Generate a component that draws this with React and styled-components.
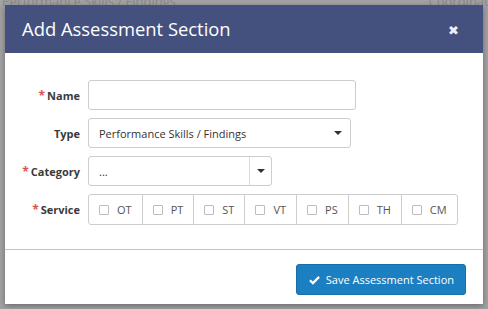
import React from "react";
import styled, { createGlobalStyle } from "styled-components";

const GlobalStyle = createGlobalStyle`
  html, body {
    margin: 0;
    padding: 0;
    width: 488px;
    height: 309px;
    overflow: hidden;
    font-family: "Open Sans", "Liberation Sans", sans-serif;
  }
`;

const services = ["OT", "PT", "ST", "VT", "PS", "TH", "CM"];

export default function App() {
  return (
    <>
      <GlobalStyle />
      <Backdrop>
        <BehindRow>
          <span>Performance Skills / Findings</span>
          <span>Coordinati</span>
        </BehindRow>
        <Modal>
          <Header>
            <Title>Add Assessment Section</Title>
            <Close>✖</Close>
          </Header>
          <Body>
            <Row>
              <Label required>Name</Label>
              <TextInput width={268} />
            </Row>
            <Row>
              <Label>Type</Label>
              <Select width={263}>
                <SelectText>Performance Skills / Findings</SelectText>
                <Caret />
              </Select>
            </Row>
            <Row>
              <Label required>Category</Label>
              <Select width={184}>
                <SelectText>...</SelectText>
                <CaretBox>
                  <Caret />
                </CaretBox>
              </Select>
            </Row>
            <Row>
              <Label required>Service</Label>
              <ServiceGroup>
                {services.map((s) => (
                  <ServiceItem key={s}>
                    <Check />
                    <span>{s}</span>
                  </ServiceItem>
                ))}
              </ServiceGroup>
            </Row>
          </Body>
          <Footer>
            <SaveButton>
              <svg width="11" height="10" viewBox="0 0 12 10">
                <path
                  d="M1 5.2 L4.3 8.4 L11 1.6"
                  fill="none"
                  stroke="#fff"
                  strokeWidth="2.4"
                />
              </svg>
              Save Assessment Section
            </SaveButton>
          </Footer>
        </Modal>
      </Backdrop>
    </>
  );
}

const Backdrop = styled.div`
  position: relative;
  width: 488px;
  height: 309px;
  background: #a2a2a2;
  overflow: hidden;
`;

const BehindRow = styled.div`
  display: flex;
  justify-content: space-between;
  padding: 0 0 0 2px;
  margin-top: -8px;
  font-size: 13px;
  line-height: 18px;
  color: #8a8a8a;
  span:last-child {
    margin-right: -4px;
  }
`;

const Modal = styled.div`
  position: absolute;
  left: 5px;
  top: 5px;
  width: 478px;
  height: 299px;
  background: #fff;
  box-shadow: 0 2px 6px rgba(0, 0, 0, 0.35);
  display: flex;
  flex-direction: column;
`;

const Header = styled.div`
  height: 48px;
  background: #44517e;
  display: flex;
  align-items: center;
  justify-content: space-between;
  padding: 0 24px 0 17px;
  box-sizing: border-box;
`;

const Title = styled.div`
  color: #fff;
  font-size: 18.4px;
  margin-top: -1px;
`;

const Close = styled.div`
  color: #eef0f5;
  font-size: 13px;
  margin-top: 1px;
`;

const Body = styled.div`
  display: flex;
  flex-direction: column;
  gap: 8px;
  padding: 27px 0 0 0;
  height: 197px;
  box-sizing: border-box;
  border-bottom: 1px solid #c4c4c4;
`;

const Row = styled.div`
  display: flex;
  align-items: center;
  gap: 8px;
`;

const Label = styled.div`
  width: 75px;
  text-align: right;
  font-size: 11px;
  font-weight: 700;
  color: #3a3a3a;
  &::before {
    content: ${(p) => (p.required ? '"*"' : '""')};
    color: #d9534f;
    margin-right: 2px;
    font-size: 12px;
  }
`;

const TextInput = styled.div`
  width: ${(p) => p.width}px;
  height: 30px;
  box-sizing: border-box;
  border: 1px solid #cdcdcd;
  border-radius: 3px;
`;

const Select = styled.div`
  width: ${(p) => p.width}px;
  height: 30px;
  box-sizing: border-box;
  border: 1px solid #cdcdcd;
  border-radius: 3px;
  display: flex;
  align-items: center;
  padding-left: 10px;
  padding-right: 8px;
`;

const SelectText = styled.div`
  flex: 1;
  font-size: 11px;
  color: #333;
`;

const CaretBox = styled.div`
  align-self: stretch;
  width: 21px;
  margin-right: -8px;
  border-left: 1px solid #dcdcdc;
  display: flex;
  align-items: center;
  justify-content: center;
`;

const Caret = styled.div`
  width: 0;
  height: 0;
  border-left: 4px solid transparent;
  border-right: 4px solid transparent;
  border-top: 4px solid #333;
`;

const ServiceGroup = styled.div`
  display: flex;
  height: 31px;
  box-sizing: border-box;
  border: 1px solid #cdcdcd;
  border-radius: 3px;
`;

const ServiceItem = styled.div`
  display: flex;
  align-items: center;
  gap: 8px;
  padding: 0 10px 0 10px;
  font-size: 11px;
  color: #555;
  & + & {
    border-left: 1px solid #cdcdcd;
  }
`;

const Check = styled.div`
  width: 8px;
  height: 8px;
  border: 1px solid #bdbdbd;
  border-radius: 1px;
`;

const Footer = styled.div`
  flex: 1;
  display: flex;
  justify-content: flex-end;
  align-items: flex-start;
  padding: 14px 17px 0 0;
`;

const SaveButton = styled.div`
  height: 31px;
  padding: 0 11px 0 12px;
  background: #1c7fc1;
  border: 1px solid #176ea8;
  border-radius: 3px;
  box-sizing: border-box;
  display: flex;
  align-items: center;
  gap: 6px;
  color: #fff;
  font-size: 11px;
`;
